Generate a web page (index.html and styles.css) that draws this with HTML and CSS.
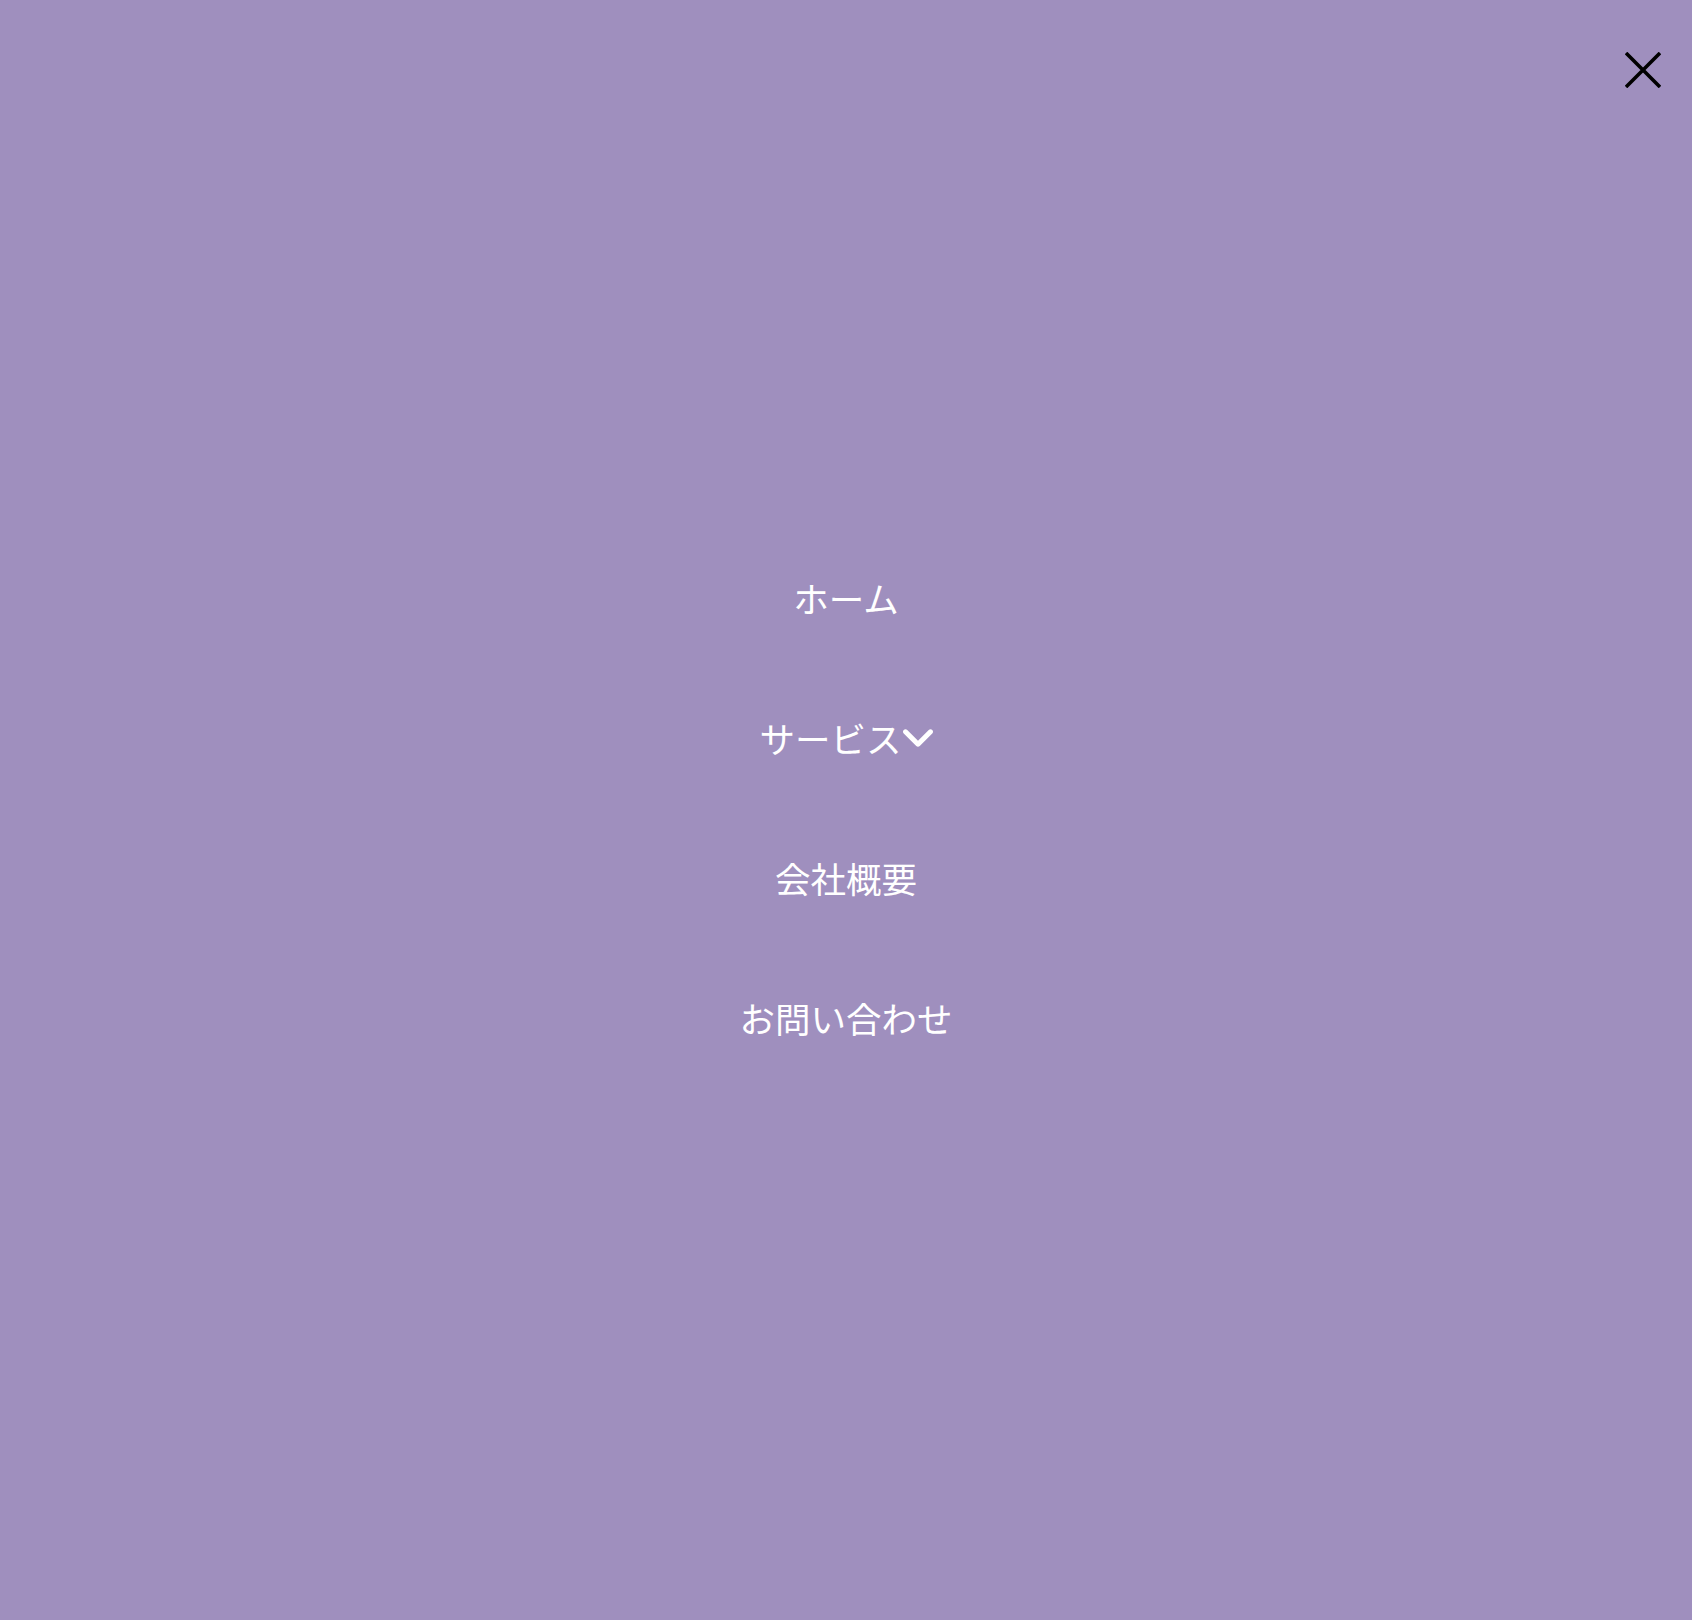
FILE: index.html
```html
<!DOCTYPE html>
<html lang="ja">
<head>
<meta charset="utf-8">
<title>メニュー</title>
<link rel="stylesheet" href="styles.css">
</head>
<body>
<div class="overlay">
  <button class="close" aria-label="閉じる">
    <svg width="36" height="36" viewBox="0 0 36 36"><path d="M1 1 L35 35 M35 1 L1 35" stroke="#000" stroke-width="3.6" fill="none"/></svg>
  </button>
  <nav class="menu">
    <a class="item" href="#">ホーム</a>
    <a class="item" href="#">サービス<svg class="chev" width="30" height="18" viewBox="32 160 384 224"><path fill="#fff" d="M201.4 374.6c12.5 12.5 32.8 12.5 45.3 0l160-160c12.5-12.5 12.5-32.8 0-45.3s-32.8-12.5-45.3 0L224 306.7 86.6 169.4c-12.5-12.5-32.8-12.5-45.3 0s-12.5 32.8 0 45.3l160 160z"/></svg></a>
    <a class="item" href="#">会社概要</a>
    <a class="item" href="#">お問い合わせ</a>
  </nav>
</div>
</body>
</html>
```
FILE: styles.css
```css
html, body {
  margin: 0;
  padding: 0;
}
body {
  background: #9f8fbe;
  font-family: "Noto Sans CJK JP", "Noto Sans", sans-serif;
}
.overlay {
  position: relative;
  width: 100%;
  height: 1620px;
  box-sizing: border-box;
  padding-bottom: 4px;
  display: flex;
  align-items: center;
  justify-content: center;
}
.close {
  position: absolute;
  top: 52px;
  right: 31px;
  width: 36px;
  height: 36px;
  padding: 0;
  border: 0;
  background: none;
  cursor: pointer;
}
.close svg {
  display: block;
}
.menu {
  display: flex;
  flex-direction: column;
  align-items: center;
  gap: 90px;
}
.item {
  color: #fff;
  text-decoration: none;
  font-size: 35.5px;
  line-height: 50px;
  display: flex;
  align-items: center;
}
.chev {
  display: block;
  margin-left: 1px;
}
```
